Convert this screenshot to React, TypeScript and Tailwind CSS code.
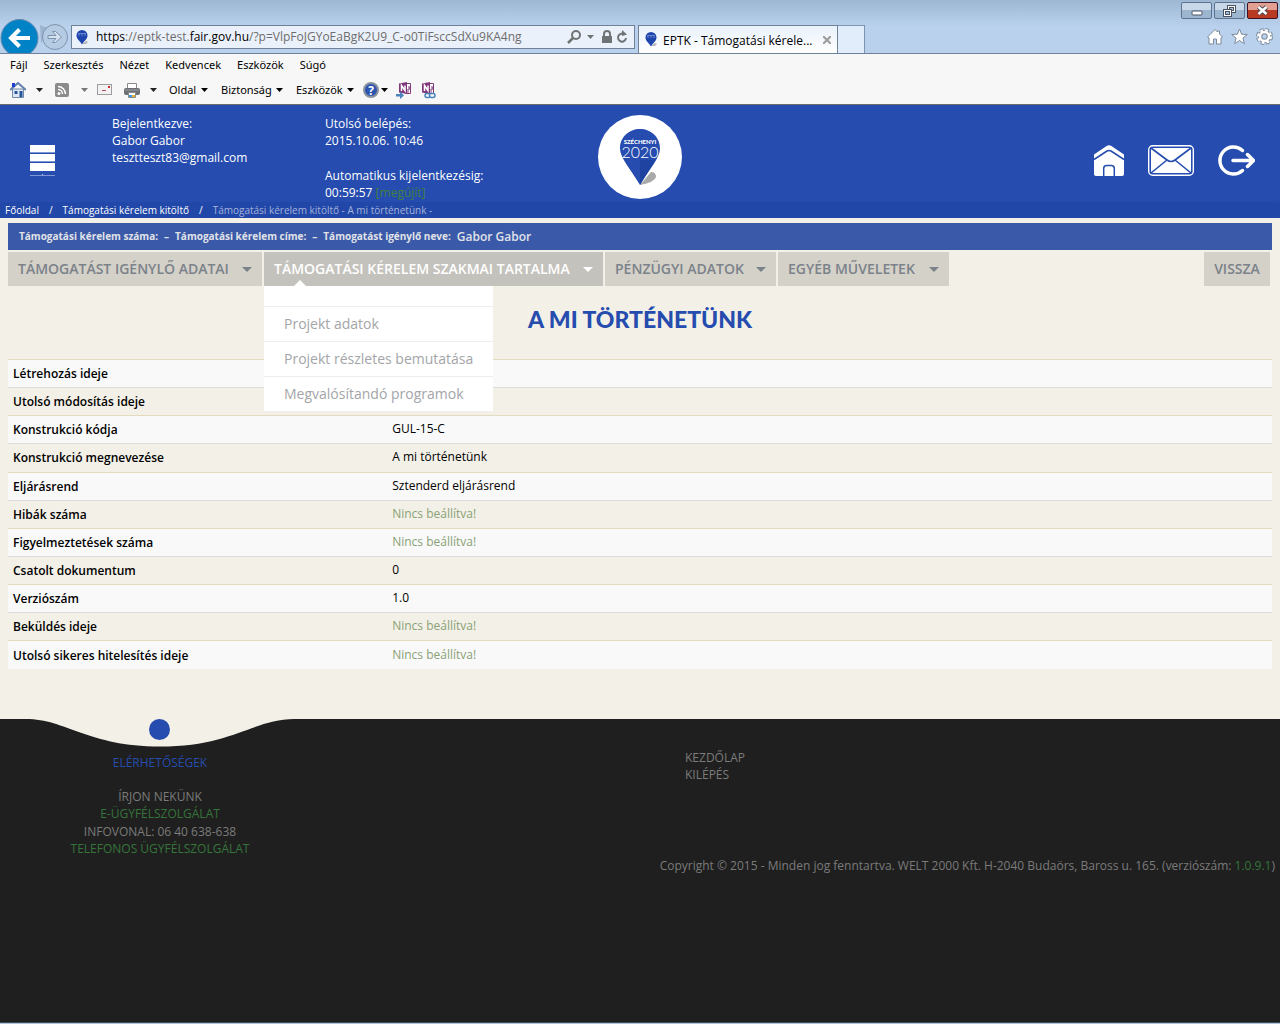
import type { ReactNode } from "react";

const MENU_ITEMS = ["Fájl", "Szerkesztés", "Nézet", "Kedvencek", "Eszközök", "Súgó"];

const DETAILS = [
  { label: "Létrehozás ideje", value: "" },
  { label: "Utolsó módosítás ideje", value: "" },
  { label: "Konstrukció kódja", value: "GUL-15-C" },
  { label: "Konstrukció megnevezése", value: "A mi történetünk" },
  { label: "Eljárásrend", value: "Sztenderd eljárásrend" },
  { label: "Hibák száma", value: null },
  { label: "Figyelmeztetések száma", value: null },
  { label: "Csatolt dokumentum", value: "0" },
  { label: "Verziószám", value: "1.0" },
  { label: "Beküldés ideje", value: null },
  { label: "Utolsó sikeres hitelesítés ideje", value: null },
];

const SUBMENU = ["Projekt adatok", "Projekt részletes bemutatása", "Megvalósítandó programok"];

function Caret({ className = "text-black" }: { className?: string }) {
  return (
    <svg width="7" height="4" viewBox="0 0 7 4" className={`shrink-0 ${className}`} aria-hidden="true">
      <path d="M0 0h7L3.5 4z" fill="currentColor" />
    </svg>
  );
}

function PinIcon() {
  return (
    <svg width="12" height="15" viewBox="0 0 12 15" className="shrink-0" aria-hidden="true">
      <path d="M6 14l4-3 2 1-2 2z" fill="#b5b5b5" />
      <path d="M6 0a5.5 5.5 0 0 1 5.500 5.500C11.500 9 8 11 6 14.500 4 11 .5 9 .5 5.500A5.500 5.500 0 0 1 6 0z" fill="#1d45ad" />
      <path d="M2 5h2M5 5h2M8 5h2M2 3.500h8" stroke="#6a86cf" strokeWidth="1" />
    </svg>
  );
}

function WindowButtons() {
  const base = "flex h-[17px] items-center justify-center rounded-[2px] border border-[#5f7390] bg-linear-to-b";
  return (
    <div className="flex gap-0.5">
      <button aria-label="Kis méret" className={`${base} w-[31px] pt-1 from-[#c8d8e8] from-50% to-[#9db6d0] to-50%`}>
        <svg width="12" height="6" viewBox="0 0 12 6">
          <rect x="1" y="1" width="10" height="4" rx="1" fill="#fff" stroke="#4a5362" />
        </svg>
      </button>
      <button aria-label="Előző méret" className={`${base} w-[31px] from-[#c8d8e8] from-50% to-[#9db6d0] to-50%`}>
        <svg width="13" height="12" viewBox="0 0 13 12" fill="#fff" stroke="#4a5362">
          <rect x="4.500" y=".5" width="8" height="7" />
          <rect x="6.500" y="2.500" width="4" height="3" fill="#a9bfd6" />
          <rect x=".5" y="4.500" width="8" height="7" />
          <rect x="2.500" y="6.500" width="4" height="3" fill="#a9bfd6" />
        </svg>
      </button>
      <button
        aria-label="Bezárás"
        className="flex h-[17px] w-[31px] items-center justify-center rounded-[2px] border border-[#3e1220] bg-linear-to-b from-[#e2a093] from-50% to-[#b93a22] to-50%"
      >
        <svg width="13" height="11" viewBox="0 0 13 11">
          <path d="M2.500 2l8 7M10.500 2l-8 7" stroke="#4f4a58" strokeWidth="4.500" />
          <path d="M2.500 2l8 7M10.500 2l-8 7" stroke="#fff" strokeWidth="2.500" />
        </svg>
      </button>
    </div>
  );
}

function AddressRow() {
  return (
    <div className="flex h-[34px] items-end">
      <button aria-label="Vissza" className="h-[34px] w-[40px] shrink-0">
        <svg width="40" height="34" viewBox="0 0 40 34">
          <circle cx="19.500" cy="19" r="18.500" fill="#0083c6" stroke="#5d87ab" />
          <path d="M30 19H12M19.500 10.500L11 19l8.500 8.500" fill="none" stroke="#fff" strokeWidth="4" />
        </svg>
      </button>
      <button aria-label="Előre" className="mr-0.5 h-[31px] w-[28px] shrink-0">
        <svg width="28" height="31" viewBox="0 0 28 31">
          <path d="M0 3q8 4 16 3L6 9 1 22z" fill="#9db5d0" />
          <circle cx="15" cy="15" r="12.500" fill="#b5cbe4" stroke="#7e93ac" />
          <path d="M8 13.500h8l-3.500-4h3l6 5.500-6 5.500h-3l3.500-4H8z" fill="#d3e1f0" stroke="#7e93ac" />
        </svg>
      </button>
      <div className="mb-1 ml-px flex h-6 w-[564px] shrink-0 items-center border border-[#6f8196] bg-[#ebf1fa] pl-1 pr-1">
        <PinIcon />
        <div
          role="textbox"
          aria-label="Cím"
          className="ml-2 flex-1 whitespace-nowrap font-['Open_Sans','Noto_Sans',sans-serif] text-[12px] text-[#6d6d6d]"
        >
          <span className="text-black">https</span>://eptk-test.<span className="text-black">fair.gov.hu</span>
          /?p=VlpFoJGYoEaBgK2U9_C-o0TiFsccSdXu9KA4ng
        </div>
        <svg width="64" height="14" viewBox="0 0 64 14" fill="none" stroke="#6f7376" className="shrink-0" aria-hidden="true">
          <circle cx="10" cy="5" r="4" strokeWidth="2" />
          <path d="M7 8l-5 5" strokeWidth="2.500" />
          <path d="M21 5h7l-3.500 4z" fill="#6f7376" stroke="none" />
          <path d="M36 6h10v7H36z" fill="#6f7376" stroke="none" />
          <path d="M38 6V4a3 3 0 0 1 6 0v2" strokeWidth="2" />
          <path d="M58.500 4.500A4 4 0 1 0 60 8" strokeWidth="2" />
          <path d="M56 0l5 4.500-5 1.500z" fill="#6f7376" stroke="none" />
        </svg>
      </div>
      <div className="ml-[3px] flex h-7 w-[200px] shrink-0 items-center border border-b-0 border-[#6f8196] bg-linear-to-b from-[#e9f1fb] to-white pl-1.5 pr-1.5">
        <PinIcon />
        <span className="ml-1.5 flex-1 whitespace-nowrap pt-0.5 font-['Open_Sans','Noto_Sans',sans-serif] text-[12px] text-black">
          EPTK - Támogatási kérele...
        </span>
        <button aria-label="Lap bezárása">
          <svg width="8" height="8" viewBox="0 0 8 8" stroke="#9a9a9a" strokeWidth="2">
            <path d="M0 0l8 8M8 0L0 8" />
          </svg>
        </button>
      </div>
      <button aria-label="Új lap" className="h-7 w-[27px] shrink-0 border border-b-0 border-l-0 border-[#8095ad] bg-[#e1edfa]" />
      <div className="ml-auto flex items-center gap-2 self-start pr-[7px] pt-[9px]">
        <svg width="16" height="17" viewBox="0 0 16 17" fill="#fff" stroke="#7d8b9c">
          <path d="M8 1.500l2.500 2.500V3h2v3L15.500 9 14 10v6H9.500v-5h-3v5H2v-6L.5 9z" />
        </svg>
        <svg width="17" height="17" viewBox="0 0 17 17" fill="#fff" stroke="#7d8b9c">
          <path d="M8.500 1l2.100 5.200 5.700.3-4.400 3.600 1.500 5.600-4.900-3.200-4.900 3.200 1.500-5.600L.7 6.500l5.700-.3z" />
        </svg>
        <svg width="17" height="17" viewBox="0 0 17 17" fill="none">
          <circle cx="8.500" cy="8.500" r="6.500" stroke="#7d8b9c" strokeWidth="4" strokeDasharray="3.300 1.800" />
          <circle cx="8.500" cy="8.500" r="4.500" stroke="#7d8b9c" strokeWidth="4.500" />
          <circle cx="8.500" cy="8.500" r="6" stroke="#fff" strokeWidth="3" strokeDasharray="2.500 2.210" />
          <circle cx="8.500" cy="8.500" r="4.500" stroke="#fff" strokeWidth="2.500" />
        </svg>
      </div>
    </div>
  );
}

function OneNoteIcon({ linked = false }: { linked?: boolean }) {
  return (
    <svg width="17" height="17" viewBox="0 0 17 17" aria-hidden="true">
      <path d="M9.500 1.500h5v10h-5" fill="#fff" stroke="#80397b" />
      <path d="M12 5h2v2h-2v4" fill="none" stroke="#80397b" />
      <path d="M3 1.500L11 0v12l-8-1.500z" fill="#80397b" />
      <path d="M5.500 9V3.500L9 8.500v-5" fill="none" stroke="#fff" strokeWidth="1.500" />
      {linked ? (
        <g fill="#f7f7f7" stroke="#4a84bd" strokeWidth="1.500">
          <rect x="6" y="11.500" width="5.500" height="4" rx="2" />
          <rect x="10.500" y="11.500" width="5.500" height="4" rx="2" />
        </g>
      ) : (
        <path d="M0 12h4V9.500l4 4-4 3.500v-2.500H0z" fill="#4a84bd" />
      )}
    </svg>
  );
}

function CommandBar() {
  return (
    <div className="flex h-7 items-center pl-2.5 text-[11px] text-black">
      <button aria-label="Kezdőlap" className="w-4">
        <svg width="16" height="16" viewBox="0 0 16 16">
          <path d="M2.500 7h11v8.500h-11z" fill="#dfe8f2" stroke="#7288a8" />
          <path d="M0 8l8-7 8 7" fill="none" stroke="#607fae" strokeWidth="2" />
          <path d="M2 1h3v4H2z" fill="#1f3fd0" />
          <path d="M4.500 9h3v3h-3zM9.500 9h3v6h-3z" fill="#27549b" />
        </svg>
      </button>
      <Caret className="ml-2.5 text-[#222]" />
      <button aria-label="Hírcsatornák" className="ml-3 w-3.5">
        <svg width="14" height="14" viewBox="0 0 14 14">
          <rect width="14" height="14" rx="2" fill="#8b8b8b" />
          <path d="M3 3.500a7.500 7.500 0 0 1 7.500 7.500M3 6.500A4.500 4.500 0 0 1 7.500 11" fill="none" stroke="#fff" strokeWidth="1.500" />
          <circle cx="4" cy="10.500" r="1.500" fill="#fff" />
        </svg>
      </button>
      <Caret className="ml-3 text-[#777]" />
      <button aria-label="Levelek" className="ml-[9px] w-[15px]">
        <svg width="15" height="12" viewBox="0 0 15 12">
          <rect x=".5" y=".5" width="14" height="10" fill="#f3f1f1" stroke="#9d9d9d" />
          <path d="M11 3h2" stroke="#d7282f" strokeWidth="2" />
          <path d="M5 6.500h4" stroke="#a55" />
        </svg>
      </button>
      <button aria-label="Nyomtatás" className="ml-3 w-4">
        <svg width="16" height="15" viewBox="0 0 16 15">
          <path d="M3.500.5h9v6h-9z" fill="#fff" stroke="#888" />
          <rect y="5" width="16" height="7" rx="2" fill="#6b6f73" />
          <path d="M1 7h14" stroke="#9da1a5" />
          <path d="M4.500 9.500h7v5h-7z" fill="#fff" stroke="#888" />
          <path d="M5 12h3v2H5z" fill="#3a99d8" />
          <path d="M8 12h3v2H8z" fill="#e2b93b" />
        </svg>
      </button>
      <Caret className="ml-2.5 text-[#222]" />
      <button className="ml-3 flex w-[39px] items-center justify-between">
        Oldal <Caret />
      </button>
      <button className="ml-[13px] flex w-[62px] items-center justify-between">
        Biztonság <Caret />
      </button>
      <button className="ml-[13px] flex w-[58px] items-center justify-between">
        Eszközök <Caret />
      </button>
      <button aria-label="Súgó" className="ml-[9px] flex items-center gap-0.5">
        <svg width="16" height="16" viewBox="0 0 16 16">
          <circle cx="8" cy="8" r="7" fill="#2c54b0" stroke="#8c929c" strokeWidth="2" />
          <text x="8" y="12.500" textAnchor="middle" fontSize="12" fontWeight="700" fill="#fff" fontFamily="Open Sans, sans-serif">
            ?
          </text>
        </svg>
        <Caret />
      </button>
      <button aria-label="Küldés a OneNote-ba" className="ml-2 w-[17px]">
        <OneNoteIcon />
      </button>
      <button aria-label="Csatolt OneNote-jegyzetek" className="ml-1.5 w-[17px]">
        <OneNoteIcon linked />
      </button>
    </div>
  );
}

function BrowserChrome() {
  return (
    <div className="border-b border-[#6d6d6d] bg-[#f7f7f7] font-['Noto_Sans','Open_Sans',sans-serif]">
      <div className="border-b border-[#70829b] bg-linear-to-b from-[#9db7d3] to-[#b9d1ec] to-50%">
        <div className="flex h-[19px] items-start justify-end pr-0.5 pt-0.5">
          <WindowButtons />
        </div>
        <AddressRow />
      </div>
      <nav className="flex h-[22px] items-center gap-4 pl-2.5 text-[11px] text-black">
        {MENU_ITEMS.map((item) => (
          <button key={item}>{item}</button>
        ))}
      </nav>
      <CommandBar />
    </div>
  );
}

function Logo() {
  return (
    <svg width="84" height="84" viewBox="0 0 84 84" role="img" aria-label="Széchenyi 2020">
      <circle cx="42" cy="42" r="42" fill="#fff" />
      <path d="M42 70l11-13q5 0 5 5-1 5-16 8z" fill="#a9a9a9" />
      <path d="M42 14c11 0 20 8 20 19.500 0 9-10 20-20 36.500C32 53.500 22 42.500 22 33.500 22 22 31 14 42 14z" fill="#254cae" />
      <path d="M42 45h15.500C53 52 47 61.500 42 70z" fill="#1f43a0" />
      <text x="42" y="29" textAnchor="middle" fontSize="6" fontWeight="900" fill="#fff" fontFamily="Lato, sans-serif">
        SZÉCHENYI
      </text>
      <text x="42" y="43" textAnchor="middle" fontSize="16" fontWeight="300" fill="#fff" fontFamily="Lato, sans-serif">
        2020
      </text>
    </svg>
  );
}

function SiteHeader() {
  return (
    <header className="bg-[#254cae] text-[12px] leading-[17px] text-white">
      <div className="grid h-[97px] grid-cols-[1fr_auto_1fr]">
        <div className="flex pl-[30px] pt-[10px]">
          <button aria-label="Menü" className="mt-[30px] h-8 w-[25px] shrink-0">
            <svg width="25" height="32" viewBox="0 0 25 32" fill="#fff">
              <path d="M0 0h25v7H0zM0 9h25v7H0zM0 18h25v8H0zM11 31l1.500-2 1.500 2z" />
              <path d="M0 7.500h25M0 16.500h25M0 30.500h25" stroke="#7f97d3" />
            </svg>
          </button>
          <p className="ml-[57px] w-[213px] shrink-0 whitespace-nowrap">
            Bejelentkezve:
            <br />
            Gabor Gabor
            <br />
            tesztteszt83@gmail.com
          </p>
          <div className="whitespace-nowrap">
            <p>
              Utolsó belépés:
              <br />
              2015.10.06. 10:46
            </p>
            <p className="mt-[18px]">
              Automatikus kijelentkezésig:
              <br />
              00:59:57{" "}
              <a href="#" className="text-[#43803f]">
                [megújít]
              </a>
            </p>
          </div>
        </div>
        <a href="#" className="mt-2.5 h-[84px]">
          <Logo />
        </a>
        <div className="flex items-center justify-end gap-6 pr-[25px] pt-[15px]">
          <a href="#" aria-label="Főoldal">
            <svg width="30" height="32" viewBox="0 0 30 32" fill="none">
              <path d="M0 9.500L13 .7q2-1 4 0L30 9.500V29q0 2-2 2H2q-2 0-2-2z" fill="#fff" />
              <path d="M0 14.500L13 6q2-1.200 4 0l13 8.500" stroke="#254cae" strokeWidth="1.500" />
              <path d="M9.700 32v-8.500q0-3 3-3h4.600q3 0 3 3V32" stroke="#254cae" strokeWidth="1.500" />
            </svg>
          </a>
          <a href="#" aria-label="Üzenetek">
            <svg width="46" height="32" viewBox="0 0 46 32" fill="none">
              <rect x=".7" y=".7" width="44.600" height="29.600" rx="4" fill="#254cae" stroke="#fff" strokeWidth="1.400" />
              <rect x="3" y="3" width="40" height="25" rx="2" fill="#fff" />
              <path d="M3 3l16 12q4 3 8 0L43 3M3 28l16-13M43 28L27 15" stroke="#254cae" strokeWidth="1.600" />
            </svg>
          </a>
          <a href="#" aria-label="Kilépés">
            <svg width="37" height="32" viewBox="0 0 37 32" fill="none" stroke="#fff" strokeWidth="3.500" strokeLinecap="round" strokeLinejoin="round">
              <path d="M24.500 5.500A13.500 13.500 0 1 0 24.500 25.500" />
              <path d="M15 15.500h20M29.500 9.500l6 6-6 6" />
            </svg>
          </a>
        </div>
      </div>
      <nav className="flex h-4 items-center gap-2.5 rounded-t bg-[#2147a9] pl-[5px] text-[10px] leading-4">
        <a href="#">Főoldal</a>
        <span>/</span>
        <a href="#">Támogatási kérelem kitöltő</a>
        <span>/</span>
        <span className="text-[#a3b2d8]">Támogatási kérelem kitöltő - A mi történetünk -</span>
      </nav>
    </header>
  );
}

type TabProps = { label: string; width: string; active?: boolean; children?: ReactNode };

function Tab({ label, width, active = false, children }: TabProps) {
  return (
    <li className={`relative ${width}`}>
      <button
        className={`flex h-[34px] w-full items-center justify-between whitespace-nowrap px-2.5 text-[14px] font-semibold ${
          active ? "bg-[#c4c2bc] text-white" : "bg-[#d4d1c9] text-[#7b8289]"
        }`}
      >
        <span className="pb-0.5">{label}</span>
        <svg width="10" height="5" viewBox="0 0 10 5" className="shrink-0" aria-hidden="true">
          <path d="M0 0h10L5 5z" fill="currentColor" />
        </svg>
      </button>
      {children}
    </li>
  );
}

function MainNav() {
  return (
    <nav className="mt-0.5 flex justify-between pr-0.5">
      <ul className="flex gap-0.5">
        <Tab label="TÁMOGATÁST IGÉNYLŐ ADATAI" width="w-[254px]" />
        <Tab label="TÁMOGATÁSI KÉRELEM SZAKMAI TARTALMA" width="w-[339px]" active>
          <svg width="12" height="6" viewBox="0 0 12 6" className="absolute bottom-0 left-[30px]" aria-hidden="true">
            <path d="M0 6l6-6 6 6z" fill="#fff" />
          </svg>
          <ul className="absolute left-0 top-full z-10 w-[229px] bg-white pt-5 text-[14px] text-[#a3a5a8]">
            {SUBMENU.map((item) => (
              <li key={item} className="border-t border-[#ededed]">
                <a href="#" className="block whitespace-nowrap px-5 leading-[34px]">
                  {item}
                </a>
              </li>
            ))}
          </ul>
        </Tab>
        <Tab label="PÉNZÜGYI ADATOK" width="w-[171px]" />
        <Tab label="EGYÉB MŰVELETEK" width="w-[171px]" />
      </ul>
      <button className="h-[34px] w-[66px] bg-[#d4d1c9] pb-0.5 text-[14px] font-semibold text-[#7b8289]">VISSZA</button>
    </nav>
  );
}

function DetailsTable() {
  return (
    <table className="mt-[25px] h-[310px] w-full border-collapse text-left text-[12px] leading-4 text-black">
      <tbody>
        {DETAILS.map(({ label, value }) => (
          <tr key={label} className="h-7 border-t border-[#dcdcdc] odd:border-[#e3dcc0] odd:bg-[#f9f9f9]">
            <th scope="row" className="w-[30%] px-[5px] pt-px font-semibold">
              {label}
            </th>
            <td className="px-[5px] pb-px">
              {value === null ? <span className="text-[#8aa276]">Nincs beállítva!</span> : value}
            </td>
          </tr>
        ))}
      </tbody>
    </table>
  );
}

function SiteFooter() {
  return (
    <footer className="flex-1 bg-[#1f1f1f] text-[12px] leading-[17px] text-[#7b7b7b]">
      <div className="flex">
        <div className="w-1/2">
          <div className="w-[320px] text-center">
            <svg width="320" height="28" viewBox="0 0 320 28" aria-hidden="true">
              <path d="M26 0C66 0 88 27.500 160 27.500S254 0 294 0z" fill="#f3f0e7" />
              <circle cx="159.500" cy="10.500" r="10.500" fill="#254cae" />
            </svg>
            <p className="mt-[7px] text-[#254cae]">ELÉRHETŐSÉGEK</p>
            <p className="mt-[17px]">ÍRJON NEKÜNK</p>
            <a href="#" className="block text-[#35753a]">
              E-ÜGYFÉLSZOLGÁLAT
            </a>
            <p className="mt-px">INFOVONAL: 06 40 638-638</p>
            <a href="#" className="block text-[#35753a]">
              TELEFONOS ÜGYFÉLSZOLGÁLAT
            </a>
          </div>
        </div>
        <div className="flex w-1/2 flex-col items-start pl-[45px] pt-[30px]">
          <a href="#">KEZDŐLAP</a>
          <a href="#">KILÉPÉS</a>
        </div>
      </div>
      <p className="pr-[5px] text-right">
        Copyright © 2015 - Minden jog fenntartva. WELT 2000 Kft. H-2040 Budaörs, Baross u. 165. (verziószám:{" "}
        <span className="text-[#35753a]">1.0.9.1</span>)
      </p>
    </footer>
  );
}

export default function App() {
  return (
    <div className="flex min-h-screen flex-col bg-[#f3f0e7] font-['Open_Sans','Noto_Sans',sans-serif]">
      <BrowserChrome />
      <SiteHeader />
      <main className="px-2 pb-[50px] pt-[5px]">
        <p className="flex h-[27px] items-center whitespace-nowrap bg-[#3a5aa9] pl-[11px] text-[10px] font-bold text-[#e0e2e8]">
          Támogatási kérelem száma:
          <span className="mx-1.5">–</span>
          Támogatási kérelem címe:
          <span className="mx-1.5">–</span>
          Támogatást igénylő neve:
          <span className="ml-1.5 text-[12px] font-semibold">Gabor Gabor</span>
        </p>
        <MainNav />
        <h1 className="mt-[18px] text-center font-[Lato,sans-serif] text-[23px] font-black leading-[30px] text-[#254cae]">
          A MI TÖRTÉNETÜNK
        </h1>
        <DetailsTable />
      </main>
      <SiteFooter />
      <div className="h-0.5 border-t border-[#3c4c63] bg-[#b4c4d8]" />
    </div>
  );
}
